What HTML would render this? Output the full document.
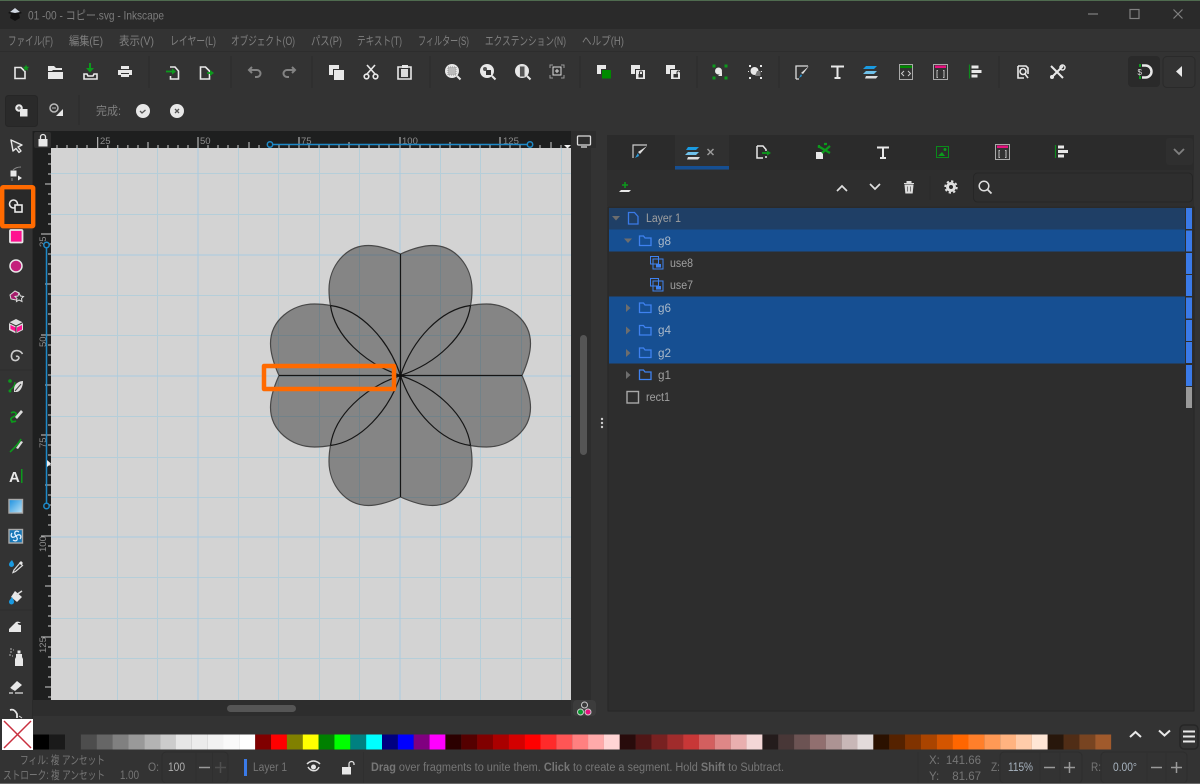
<!DOCTYPE html>
<html><head><meta charset="utf-8"><style>
html,body{margin:0;padding:0;background:#333;width:1200px;height:784px;overflow:hidden}
svg{display:block}
text{font-family:"Liberation Sans","Noto Sans CJK JP",sans-serif}
.m{font-size:12px;fill:#7f7f7f}
.l{font-size:11.5px;fill:#a0a0a0}
.s{font-size:11.5px;fill:#767676}
.r{font-size:9.5px;fill:#8d8d8d}
.w{fill:#e8e8e8}
.o{fill:none;stroke:#e8e8e8;stroke-width:1.6}
.d{fill:none;stroke:#838383;stroke-width:2}
</style></head><body>
<svg width="1200" height="784" viewBox="0 0 1200 784" xmlns="http://www.w3.org/2000/svg">
<rect width="1200" height="784" fill="#333"/>
<!-- title -->
<rect width="1200" height="29" fill="#2a2a2a"/>
<rect width="1200" height="1" fill="#4f6b4f"/>
<rect y="51" width="1200" height="1" fill="#2d2d2d"/>
<path d="M15 8l7 5-3 1 1 4-5 3-5-3 1-4-3-1z" fill="#111"/><path d="M15 8l5 4-5 1-5-1z" fill="#cfd6e0"/>
<text x="28" y="19.500" font-size="12" fill="#7c7c7c" textLength="136" lengthAdjust="spacingAndGlyphs">01 -00 - コピー.svg - Inkscape</text>
<path d="M1088 14h10" stroke="#808080" stroke-width="1.200"/>
<rect x="1130" y="9.500" width="9" height="9" fill="none" stroke="#808080" stroke-width="1.200"/>
<path d="M1173.500 9.500l9 9M1182.500 9.500l-9 9" stroke="#808080" stroke-width="1.200"/>
<!-- menu -->
<text class="m" x="8" y="45" textLength="45" lengthAdjust="spacingAndGlyphs">ファイル(F)</text>
<text class="m" x="69" y="45" textLength="34" lengthAdjust="spacingAndGlyphs">編集(E)</text>
<text class="m" x="119" y="45" textLength="35" lengthAdjust="spacingAndGlyphs">表示(V)</text>
<text class="m" x="170" y="45" textLength="46" lengthAdjust="spacingAndGlyphs">レイヤー(L)</text>
<text class="m" x="231" y="45" textLength="64" lengthAdjust="spacingAndGlyphs">オブジェクト(O)</text>
<text class="m" x="311" y="45" textLength="31" lengthAdjust="spacingAndGlyphs">パス(P)</text>
<text class="m" x="357" y="45" textLength="45" lengthAdjust="spacingAndGlyphs">テキスト(T)</text>
<text class="m" x="418" y="45" textLength="51" lengthAdjust="spacingAndGlyphs">フィルター(S)</text>
<text class="m" x="485" y="45" textLength="81" lengthAdjust="spacingAndGlyphs">エクステンション(N)</text>
<text class="m" x="582" y="45" textLength="42" lengthAdjust="spacingAndGlyphs">ヘルプ(H)</text>
<!-- toolbar seps -->
<path d="M149 56v32M231 56v32M312 56v32M430 56v32M580 56v32M697 56v32M779 56v32M999 56v32M79 95v30" stroke="#2b2b2b"/>
<!-- toolbar icons -->
<path d="M15 67.500h6l4 4v7H15z" class="o"/><path d="M26 64.500l1 2.200 2.300.2-1.800 1.500.6 2.300-2.100-1.200-2 1.200.5-2.300-1.700-1.500 2.300-.2z" fill="#0c9a1c"/>
<path d="M48 66h6l2 2h6v2h-9l-1 1h-4zM48 72h15v7H48z" class="w"/>
<path d="M90 63v7" stroke="#0c9a1c" stroke-width="2"/><path d="M86 68h8l-4 4.500z" fill="#0c9a1c"/><path d="M84 74v5h13v-5h-3l-1 2h-5l-1-2z" class="o"/>
<path d="M121 66h8v3h-8zM118 70h14v5h-3v-2h-8v2h-3zM121 74h8v3h-8z" class="w"/>
<path d="M170 67h5l3.500 4v8h-8v-3" class="o"/><path d="M166 71.500h8" stroke="#0c9a1c" stroke-width="1.800"/><path d="M172 68.500l4 3-4 3z" fill="#0c9a1c"/>
<path d="M200.500 67h5l4 4v8h-9z" class="o"/><path d="M207 73h5" stroke="#0c9a1c" stroke-width="1.800"/><path d="M210 70l4 3-4 3z" fill="#0c9a1c"/>
<path d="M249 70h8a3.500 3.500 0 0 1 0 7h-2M252 67l-3 3 3 3" class="d"/>
<path d="M295 70h-8a3.500 3.500 0 0 0 0 7h2M292 67l3 3-3 3" class="d"/>
<rect x="329" y="65" width="10" height="10" class="w"/><rect x="333" y="69" width="11" height="11" fill="#333"/><rect x="334" y="70" width="10" height="10" class="w"/>
<path d="M367 65l8 9M375 65l-8 9" class="o"/><circle cx="366.500" cy="76.500" r="2.300" class="o"/><circle cx="375.500" cy="76.500" r="2.300" class="o"/>
<path d="M398 67h13v12h-13z" class="o"/><rect x="402" y="65" width="6" height="3" class="w"/><rect x="401" y="69" width="7" height="8" fill="#ddd"/>
<g><circle cx="452" cy="71" r="7" class="w"/><path d="M457 76l3.500 3.500" stroke="#e8e8e8" stroke-width="2"/><rect x="448" y="67" width="8" height="8" fill="#bbb" stroke="#999" stroke-dasharray="1 1"/></g>
<circle cx="487" cy="71" r="7" class="w"/><path d="M492 76l3.500 3.500" stroke="#e8e8e8" stroke-width="2"/><rect x="486" y="70" width="5" height="5" fill="#333"/><circle cx="485" cy="69" r="2" fill="#555"/>
<circle cx="522" cy="71" r="7" class="w"/><path d="M527 76l3.500 3.500" stroke="#e8e8e8" stroke-width="2"/><rect x="519.500" y="66" width="5.500" height="11" fill="#555" stroke="#ddd"/>
<path d="M550 68v-3h3M561 65h3v3M564 75v3h-3M553 78h-3v-3" fill="none" stroke="#999"/><rect x="553" y="67" width="8" height="8" fill="none" stroke="#ddd"/><path d="M555 71h4M557 69v4" stroke="#ddd"/>
<rect x="597" y="65" width="9" height="9" class="w"/><rect x="601" y="69" width="11" height="10" fill="#333"/><rect x="602" y="70" width="9" height="8.500" fill="#008a00"/>
<rect x="631" y="65" width="9" height="9" class="w"/><rect x="635" y="69" width="11" height="11" fill="#333"/><rect x="636" y="70" width="9" height="9" class="w"/><rect x="638.500" y="74" width="4.500" height="3.500" fill="#333"/><path d="M639.500 74v-1.500a1.500 1.500 0 0 1 3 0V74" fill="none" stroke="#333"/>
<rect x="666" y="65" width="9" height="9" class="w"/><rect x="670" y="69" width="11" height="11" fill="#333"/><rect x="671" y="70" width="9" height="9" class="w"/><rect x="673.500" y="74" width="4.500" height="3.500" fill="#333"/><path d="M677 74v-1.500a1.500 1.500 0 0 1 3 0" fill="none" stroke="#333"/>
<path d="M713 65h2v2h-2zM725 65h2v2h-2zM713 77h2v2h-2zM725 77h2v2h-2z" fill="#0c9a1c" stroke="#0c9a1c"/><circle cx="718.500" cy="71" r="3.500" class="w"/><path d="M722 72v4h-4l2-2z" class="w"/>
<path d="M749 65h2v2h-2zM760 65h2v2h-2zM749 77h2v2h-2zM760 77h2v2h-2zM748 71h1v1h-1zM761 71h1v1h-1z" class="w"/><circle cx="754.500" cy="71" r="4" class="w"/><path d="M757 71h3.500v5H755z" fill="#777"/>
<path d="M796 79V66h12M796 79h3" fill="none" stroke="#ddd" stroke-width="1.300"/><path d="M809 66l-6 8-2-1z" fill="#e0e0e0"/><path d="M801 74l-2 4 3-2z" fill="#2a9bdc"/>
<path d="M831 66.500h13M837.500 66.500V78M834.500 78h6" stroke="#e8e8e8" stroke-width="2" fill="none"/>
<path d="M866 66h11l-3 3h-11z" fill="#1a9ae0"/><path d="M866 71h11l-3 3h-11z" fill="#6fc1ea"/><path d="M866 76h12l-2 2.500h-11z" fill="#ddd"/>
<rect x="899.500" y="64.500" width="13" height="15" fill="#333" stroke="#aaa"/><rect x="900" y="65.500" width="12" height="2.500" fill="#008a00"/><path d="M904 71l-2.500 2.500L904 76M908 71l2.500 2.500L908 76" fill="none" stroke="#ccc"/>
<rect x="933.500" y="64.500" width="14" height="15" fill="#333" stroke="#aaa"/><rect x="935" y="65.500" width="11" height="2.500" fill="#e6127f"/><path d="M938 70.500h-1v7h1M943 70.500h1v7h-1" fill="none" stroke="#bbb"/>
<path d="M969.500 64.500v14" stroke="#0c8a1c" stroke-width="1.200"/><rect x="971.500" y="65.500" width="7" height="3" class="w"/><rect x="971.500" y="70" width="10" height="3" class="w"/><rect x="971.500" y="74.500" width="6" height="3" class="w"/>
<path d="M1018 66h8l2 2v6M1018 66v12h6" class="o"/><circle cx="1023" cy="71.500" r="3" class="o"/><path d="M1025 74l3 4" class="o"/>
<path d="M1051 66l12 12M1063 66l-12 12" stroke="#e8e8e8" stroke-width="2"/><circle cx="1062.500" cy="67.500" r="2.500" fill="none" stroke="#e8e8e8" stroke-width="1.500"/><circle cx="1052" cy="77" r="2" class="w"/>
<rect x="1128" y="56" width="32" height="31" rx="4" fill="#2a2a2a"/><rect x="1163" y="56.500" width="32" height="31" rx="4" fill="#333" stroke="#2a2a2a"/>
<path d="M1142 65.500h3.500a6 6 0 0 1 0 12h-3.500" fill="none" stroke="#e8e8e8" stroke-width="2.500"/><path d="M1139 64h2v3h-2zM1139 76h2v3h-2z" fill="#0c9a1c"/><text x="1137.500" y="75" font-size="8" fill="#ddd">$</text>
<path d="M1176 71.500l6-5.500v11z" class="w"/>
<!-- tool controls -->
<rect x="5.500" y="95.500" width="32" height="31" rx="3" fill="#2a2a2a" stroke="#262626"/>
<circle cx="19" cy="108" r="3.800" class="w"/><rect x="20" y="109" width="7.500" height="7.500" class="w"/><path d="M17 108h4M19 106v4" stroke="#333"/>
<circle cx="54" cy="108" r="4" fill="none" stroke="#bbb" stroke-width="1.500"/><path d="M52 108h4" stroke="#bbb"/><path d="M56 116h7v-7z" class="w"/>
<text class="m" x="96" y="115" textLength="25" lengthAdjust="spacingAndGlyphs">完成:</text>
<circle cx="143" cy="111" r="7" class="w"/><path d="M140 111l2 2 3.500-3" fill="none" stroke="#555" stroke-width="1.300"/>
<circle cx="177" cy="111" r="7" class="w"/><path d="M175 109l4 4M179 109l-4 4" stroke="#555" stroke-width="1.300"/>
<!-- ruler/canvas -->
<rect x="33" y="131" width="538" height="585" fill="#1e1f1f"/>
<rect x="34" y="132" width="17" height="16" rx="2" fill="#2f2f2f"/>
<rect x="38.500" y="139" width="9" height="7.500" class="w"/><path d="M40.500 139v-2a2.500 2.500 0 0 1 5 0v2" fill="none" stroke="#e8e8e8" stroke-width="1.300"/>
<rect x="51" y="148" width="520" height="552" fill="#d3d3d3"/>
<g stroke="#b5ced9" stroke-width="1" fill="none">
<path d="M77.500 148v552M117.500 148v552M157.500 148v552M238.500 148v552M278.500 148v552M319.500 148v552M359.500 148v552M440.500 148v552M480.500 148v552M521.500 148v552M561.500 148v552"/>
<path d="M51 173.500h520M51 214.500h520M51 295.500h520M51 335.500h520M51 416.500h520M51 457.500h520M51 497.500h520M51 577.500h520M51 618.500h520M51 658.500h520"/>
</g>
<g stroke="#a9cbe0" stroke-width="1" fill="none"><path d="M198 148v552M400 148v552M51 255h520M51 376h520M51 537h520"/></g>
<!-- ticks -->
<g stroke="#cfcfcf" stroke-width="1" fill="none">
<path d="M57 145v3M67 145v3M77 145v3M87 145v3M97.700 137v11M107.800 145v3M117.800 145v3M127.900 145v3M138 145v3M148 142v6M158 145v3M168 145v3M178 145v3M188 145v3M198 137v11M208 145v3M218 145v3M228 145v3M238 145v3M249 142v6M259 145v3M269 145v3M279 145v3M289 145v3M299 137v11M309 145v3M319 145v3M329 145v3M339 145v3M349 142v6M359 145v3M369 145v3M379 145v3M389 145v3M400 137v11M410 145v3M420 145v3M430 145v3M440 145v3M450 142v6M460 145v3M470 145v3M480 145v3M490 145v3M500 137v11M510 145v3M520 145v3M530 145v3M540 145v3M551 142v6M561 145v3"/>
<path d="M48 154h3M48 164h3M48 174h3M48 194h3M45 184h6M48 204h3M48 214h3M48 224h3M41 234h10M48 244h3M48 254h3M48 264h3M48 274h3M45 284h6M48 294h3M48 304h3M48 314h3M48 324h3M41 335h10M48 345h3M48 355h3M48 365h3M48 375h3M45 385h6M48 395h3M48 405h3M48 415h3M48 425h3M41 435h10M48 445h3M48 455h3M48 465h3M48 475h3M45 485h6M48 495h3M48 505h3M48 515h3M48 525h3M41 536h10M48 546h3M48 556h3M48 566h3M48 576h3M45 586h6M48 596h3M48 606h3M48 616h3M48 626h3M41 637h10M48 647h3M48 657h3M48 667h3M48 677h3M45 687h6M48 697h3"/>
</g>
<text class="r" x="100" y="144">25</text><text class="r" x="200" y="144">50</text><text class="r" x="301" y="144">75</text><text class="r" x="402" y="144">100</text><text class="r" x="503" y="144">125</text>
<text class="r" transform="translate(46,247) rotate(-90)">25</text><text class="r" transform="translate(46,347) rotate(-90)">50</text><text class="r" transform="translate(46,448) rotate(-90)">75</text><text class="r" transform="translate(46,552) rotate(-90)">100</text><text class="r" transform="translate(46,653) rotate(-90)">125</text>
<path d="M270 144.500h260M46.500 245v261" stroke="#1d8ac9" stroke-width="1.500" fill="none"/>
<g fill="#1e1f1f" stroke="#1d8ac9" stroke-width="1.500"><circle cx="270" cy="144.500" r="2.700"/><circle cx="530" cy="144.500" r="2.700"/><circle cx="46.500" cy="245" r="2.700"/><circle cx="46.500" cy="506" r="2.700"/></g>
<path d="M564 145h7l-3.500 3.500z" fill="#eee"/><path d="M47 460l4 3.500-4 3.500z" fill="#eee"/>
<!-- flower -->
<defs>
<path id="hi" d="M70-70C66-40 36-12 0 0"/>
</defs>
<g transform="translate(400.500,375.500)">
<g opacity=".37" fill="#000"><path d="M0-121.500C10-126 21-130 32-130 55-130 71.500-109 71.500-86 71.500-80 71-75 70-70 75-71 80-71.500 86-71.500 109-71.500 130-55 130-32 130-21 126-10 121.500 0 126 10 130 21 130 32 130 55 109 71.500 86 71.500 80 71.500 75 71 70 70 71 75 71.500 80 71.500 86 71.500 109 55 130 32 130 21 130 10 126 0 121.500-10 126-21 130-32 130-55 130-71.500 109-71.500 86-71.500 80-71 75-70 70-75 71-80 71.500-86 71.500-109 71.500-130 55-130 32-130 21-126 10-121.500 0-126-10-130-21-130-32-130-55-109-71.500-86-71.500-80-71.500-75-71-70-70-71-75-71.500-80-71.500-86-71.500-109-55-130-32-130-21-130-10-126 0-121.500Z"/></g>
<g fill="none" stroke="#484848" stroke-width="1.200"><path d="M0-121.500C10-126 21-130 32-130 55-130 71.500-109 71.500-86 71.500-80 71-75 70-70 75-71 80-71.500 86-71.500 109-71.500 130-55 130-32 130-21 126-10 121.500 0 126 10 130 21 130 32 130 55 109 71.500 86 71.500 80 71.500 75 71 70 70 71 75 71.500 80 71.500 86 71.500 109 55 130 32 130 21 130 10 126 0 121.500-10 126-21 130-32 130-55 130-71.500 109-71.500 86-71.500 80-71 75-70 70-75 71-80 71.500-86 71.500-109 71.500-130 55-130 32-130 21-126 10-121.500 0-126-10-130-21-130-32-130-55-109-71.500-86-71.500-80-71.500-75-71-70-70-71-75-71.500-80-71.500-86-71.500-109-55-130-32-130-21-130-10-126 0-121.500Z"/></g>
<g fill="none" stroke="#151515" stroke-width="1.200">
<path d="M0-121.500V121.500M-121.500 0H121.500"/>
<use href="#hi"/><use href="#hi" transform="scale(-1,1)"/><use href="#hi" transform="scale(1,-1)"/><use href="#hi" transform="scale(-1,-1)"/>
<use href="#hi" transform="rotate(90) scale(-1,1)"/><use href="#hi" transform="rotate(90)"/><use href="#hi" transform="rotate(-90)"/><use href="#hi" transform="rotate(-90) scale(-1,1)"/>
</g>
<circle r="1.800" fill="#111"/>
</g>
<rect x="264" y="366" width="130" height="23" fill="none" stroke="#ff6a00" stroke-width="4.500" stroke-linejoin="round"/>
<!-- scrollbars -->
<rect x="33" y="700" width="538" height="16" fill="#2d2d2d"/>
<rect x="227" y="705" width="69" height="7" rx="3.500" fill="#555"/>
<rect x="571" y="148" width="20" height="552" fill="#2d2d2d"/><rect x="571" y="131" width="25" height="17" fill="#2d2d2d"/>
<rect x="580" y="335" width="7" height="120" rx="3.500" fill="#555"/>
<rect x="577.500" y="136" width="13" height="9" rx="1" fill="none" stroke="#ddd" stroke-width="1.300"/><path d="M581 147h6" stroke="#ddd" stroke-width="1.300"/>
<rect x="573" y="700" width="23" height="16" rx="4" fill="#3c3c3c"/>
<circle cx="584.500" cy="705" r="3" fill="none" stroke="#ccc"/><circle cx="580.500" cy="712" r="3" fill="#0a9a30" stroke="#ccc"/><circle cx="588" cy="712" r="3" fill="#e6127f" stroke="#ccc"/>
<circle cx="602" cy="419" r="1.200" fill="#ccc"/><circle cx="602" cy="423" r="1.200" fill="#ccc"/><circle cx="602" cy="427" r="1.200" fill="#ccc"/>
<!-- panel -->
<rect x="607" y="135" width="587" height="35" fill="#2b2b2b"/>
<rect x="607" y="170" width="587" height="36" fill="#2e2e2e"/>
<rect x="675" y="135" width="54" height="35" fill="#303030"/><rect x="675" y="166" width="54" height="3.500" fill="#164f92"/>
<path d="M633 158v-13h14" fill="none" stroke="#ccc" stroke-width="1.200"/><path d="M647 146l-7 8-2-2z" fill="#ddd"/><path d="M638 153l-3 5 4-2z" fill="#2a9bdc"/>
<path d="M688 147h11l-3 3h-10z" fill="#1a9ae0"/><path d="M688 152h11l-3 3h-11z" fill="#6fc1ea"/><path d="M688 157h12l-2 2.500h-11z" fill="#ddd"/>
<path d="M707.500 149l6 6M713.500 149l-6 6" stroke="#999" stroke-width="1.500"/>
<path d="M757 146h6l3 3.500V151M757 146v12h6M766 156v2" fill="none" stroke="#e8e8e8" stroke-width="1.500"/><path d="M762 153h7" stroke="#0c9a1c" stroke-width="1.800"/><path d="M767 150.500l4 2.500-4 2.500z" fill="#0c9a1c"/>
<rect x="816" y="152" width="7" height="7" class="w"/><path d="M818 146l12 7M830 146l-8 7M827 144h-3M819 148v-3" stroke="#0c9a1c" stroke-width="2.200" fill="none"/>
<path d="M877 147.500h12M883 147.500V158M880 158h6" stroke="#e8e8e8" stroke-width="2" fill="none"/>
<rect x="936.500" y="146.500" width="12" height="11" fill="none" stroke="#0a8a1a"/><circle cx="945" cy="149.500" r="1.500" fill="#0c9a1c"/><path d="M938 156l4-4 3 4z" fill="#0c9a1c"/>
<rect x="995.500" y="144.500" width="14" height="15" fill="#333" stroke="#aaa"/><rect x="997" y="145.500" width="11" height="2.500" fill="#e6127f"/><path d="M1000 150.500h-1v7h1M1005 150.500h1v7h-1" fill="none" stroke="#bbb"/>
<path d="M1055.500 145v13" stroke="#0c8a1c" stroke-width="1.200"/><rect x="1058" y="145.500" width="6" height="3" class="w"/><rect x="1058" y="150" width="10" height="3" class="w"/><rect x="1058" y="154.500" width="6" height="3" class="w"/>
<rect x="1166" y="138" width="27" height="27" rx="3" fill="#2f2f2f"/><path d="M1174 149l5 5 5-5" fill="none" stroke="#808080" stroke-width="1.800"/>
<path d="M625 182v6M622 185h6" stroke="#0c9a1c" stroke-width="1.500"/><path d="M621 190h10l-2 2h-10z" class="w"/>
<path d="M837 191l5-5 5 5M870 184l5 5 5-5" fill="none" stroke="#e0e0e0" stroke-width="1.700"/>
<path d="M904 183.500h10M907 183v-1.500h4v1.500M905 185h8l-.8 8h-6.400z" fill="#ddd" stroke="#ddd"/><path d="M907.500 186.500v5M910.500 186.500v5" stroke="#777"/>
<path d="M930 176v24" stroke="#2a2a2a"/>
<circle cx="951" cy="187" r="3.500" fill="none" stroke="#e0e0e0" stroke-width="3"/><circle cx="951" cy="187" r="5.800" fill="none" stroke="#e0e0e0" stroke-width="1.800" stroke-dasharray="2.300 2.240"/>
<rect x="973.500" y="173" width="219" height="29" rx="4" fill="#2e2e2e" stroke="#262626"/>
<circle cx="984" cy="186" r="4.800" fill="none" stroke="#ddd" stroke-width="1.500"/><path d="M987.500 189.500l4 4" stroke="#ddd" stroke-width="1.800"/>
<!-- list -->
<rect x="608" y="207" width="586" height="504" fill="#2d2d2d" stroke="#262626"/>
<rect x="609" y="208" width="576" height="21.500" fill="#1f3f66"/>
<rect x="609" y="229.500" width="576" height="22" fill="#164f92"/>
<rect x="609" y="296.500" width="576" height="67" fill="#164f92"/>
<g fill="#3a7ae8"><rect x="1186" y="208" width="6" height="21"/><rect x="1186" y="230.500" width="6" height="21"/><rect x="1186" y="253" width="6" height="21"/><rect x="1186" y="275" width="6" height="21"/><rect x="1186" y="297.500" width="6" height="21"/><rect x="1186" y="320" width="6" height="21"/><rect x="1186" y="342" width="6" height="21"/><rect x="1186" y="365" width="6" height="21"/></g>
<rect x="1186" y="387" width="6" height="21" fill="#999"/>
<path d="M612 216h8l-4 4.500z M624 238.500h8l-4 4.500z" fill="#6d6d6d"/>
<path d="M626 304v8l4.500-4zM626 326.500v8l4.500-4zM626 349v8l4.500-4zM626 371v8l4.500-4z" fill="#6d6d6d"/>
<path d="M628.500 212.500h6l3.500 4v7.500h-9.500z" fill="none" stroke="#3a7ae8" stroke-width="1.300"/>
<g fill="none" stroke="#3f82f0" stroke-width="1.300"><path d="M639.500 236h4l1.500 2h6v7.500h-11.500z"/><path d="M639.500 303h4l1.500 2h6v7.500h-11.500zM639.500 325.500h4l1.500 2h6v7.500h-11.500zM639.500 348h4l1.500 2h6v7.500h-11.500zM639.500 370h4l1.500 2h6v7.500h-11.500z"/></g>
<g fill="none" stroke="#3f82f0"><path d="M650.500 256.500h8v7.500h-8zM653 259h10v10h-10zM650.500 278.500h8v7.500h-8zM653 281h10v10h-10z"/></g>
<path d="M656 264h5v3.500h-5zM656 286h5v3.500h-5z" fill="#3f82f0"/>
<rect x="627" y="391.500" width="11.500" height="11.500" fill="none" stroke="#a8a8a8" stroke-width="1.400"/>
<text class="l" x="646" y="222" textLength="35" lengthAdjust="spacingAndGlyphs">Layer 1</text>
<text x="658" y="245" font-size="11.500" fill="#a9b8c8" textLength="13" lengthAdjust="spacingAndGlyphs">g8</text>
<text class="l" x="670" y="267" textLength="23" lengthAdjust="spacingAndGlyphs">use8</text>
<text class="l" x="670" y="289" textLength="23" lengthAdjust="spacingAndGlyphs">use7</text>
<text x="658" y="312" font-size="11.500" fill="#a9b8c8" textLength="13" lengthAdjust="spacingAndGlyphs">g6</text>
<text x="658" y="334" font-size="11.500" fill="#a9b8c8" textLength="13" lengthAdjust="spacingAndGlyphs">g4</text>
<text x="658" y="357" font-size="11.500" fill="#a9b8c8" textLength="13" lengthAdjust="spacingAndGlyphs">g2</text>
<text class="l" x="658" y="379" textLength="13" lengthAdjust="spacingAndGlyphs">g1</text>
<text class="l" x="646" y="401" textLength="24" lengthAdjust="spacingAndGlyphs">rect1</text>
<!-- left toolbox -->
<rect x="0" y="131" width="33" height="600" fill="#333"/><path d="M32.500 131v600" stroke="#2a2a2a"/>
<path d="M0 370h32M0 610h32" stroke="#2c2c2c"/>
<path d="M11 140l11 5-4 2 3 4-2 1.500-3-4-3 2.500z" fill="#444" stroke="#e8e8e8" stroke-width="1.400" stroke-linejoin="round"/>
<rect x="10.500" y="170.500" width="6" height="6" class="w"/><path d="M13 170c2-2 5-3 8-3" fill="none" stroke="#888"/><path d="M18 175.500l4 2.500-4 2.500z" class="w"/><path d="M12 178v3" stroke="#888"/>
<rect x="2" y="188" width="31" height="38" fill="#292929"/>
<rect x="2.200" y="187.200" width="31" height="39" rx="1" fill="none" stroke="#ff6a00" stroke-width="4.400"/>
<circle cx="13.500" cy="204" r="4" fill="none" stroke="#e8e8e8" stroke-width="1.600"/><rect x="15" y="205" width="7" height="7" fill="#292929" stroke="#e8e8e8" stroke-width="1.600"/>
<rect x="10" y="230" width="12.500" height="12.500" rx="1" fill="#ff1090" stroke="#e8e8e8" stroke-width="1.800"/>
<circle cx="16" cy="266" r="6" fill="#c4217c" stroke="#e8e8e8" stroke-width="1.500"/>
<path d="M10 295l5-4 4 2 1 5-4 2-5-1z" fill="#a51e6c" stroke="#ddd"/><path d="M19 293l1.500 3 3 .5-2 2 .5 3-3-1.500-2.500 1.500.5-3-2-2 3-.5z" fill="#333" stroke="#ddd"/>
<path d="M16 319l7 3.500v7.500l-7 3.500-7-3.500v-7.500z" fill="#ddd"/><path d="M9 322.500l7 3.500 7-3.500M16 326v7.500" stroke="#333" fill="none"/><path d="M10.500 325l5 2.500v4l-5-2.500zM17 327.500l5-2.500v4.500l-5 2.500z" fill="#ff1090"/>
<path d="M16 355.500a2 2 0 0 1 3 1.500 4 4 0 0 1-6.500 1.500 6 6 0 0 1 1-8 6.500 6.500 0 0 1 9 2.500" fill="none" stroke="#ccc" stroke-width="1.600" transform="translate(0,1)"/>
<path d="M15 382c0 3-2 6-5 8" fill="none" stroke="#0c9a1c" stroke-width="1.300"/><circle cx="10" cy="381" r="1.800" fill="#0c9a1c"/><circle cx="10" cy="391" r="1.500" fill="#0c9a1c"/><path d="M23 381c-4 0-9 3-9 8v3h3c4-1 6-6 6-11z" fill="#ddd"/><path d="M15 391l6-7" stroke="#444"/>
<path d="M11 412c3-2 6 0 5 2s-6 2-5 5 5 1 5 1" fill="none" stroke="#0c9a1c" stroke-width="1.700" transform="translate(0,1)"/><path d="M15 417l6-7 2 2-6 7z" fill="#ddd"/><circle cx="12" cy="422" r="1" fill="#0c9a1c"/>
<path d="M10 452c2-2 8-7 11-13" fill="none" stroke="#0c9a1c" stroke-width="1.600"/><path d="M16 448l5-7 2 1-5 7z" fill="#ddd"/>
<text x="9" y="482" font-size="15" font-weight="bold" fill="#e8e8e8">A</text><rect x="21" y="469" width="1.500" height="14" fill="#0c9a1c"/>
<defs><linearGradient id="gr" x1="0" y1="0" x2="1" y2="1"><stop offset="0" stop-color="#1a90e0"/><stop offset="1" stop-color="#bfe3f5"/></linearGradient></defs>
<rect x="9" y="499.500" width="13.500" height="13.500" fill="url(#gr)" stroke="#aaa" stroke-width="1.400"/>
<rect x="9" y="529.500" width="13.500" height="13.500" fill="#1878b8" stroke="#aaa" stroke-width="1.400"/><path d="M16 536c-3-4 0-6 3-4M16 536c4-3 6 0 4 3M16 536c3 4 0 6-3 4M16 536c-4 3-6 0-4-3" fill="none" stroke="#e0f0ff" stroke-width="1.300"/>
<path d="M14 570l6-7 2.500 2.500-7 6-2.500 1z" fill="#333" stroke="#ddd" stroke-width="1.200"/><path d="M21 561l2 2 -2 2-2-2z" class="w"/><path d="M12 560c-2 2-3 3-3 4.500a2.200 2.200 0 0 0 5 0c0-1.500-1-2.500-2-4.500z" fill="#1a9ae0"/>
<path d="M15 591l7 6-5 5-6-5z" class="w"/><path d="M16 595l6-4" stroke="#ddd" stroke-width="1.600"/><path d="M12 597c-1 2-3 3-3 5a2.300 2.300 0 0 0 5 0c0-2-1-3-2-5z" fill="#1a9ae0"/>
<path d="M9 632v-3c2-2 4-4 7-7 2-1 4 0 5 1h-3c-1 1 1 2 3 2v7z" class="w"/>
<path d="M16 654h6v3l1 2v7h-8v-7l1-2z" class="w"/><rect x="17.500" y="650.500" width="3" height="3" class="w"/><path d="M10 649h2M13 650h1M10 652h2M9 655h2M12 656h1" stroke="#999" stroke-width="1.200"/>
<path d="M10 688l7-7 5 4-7 6z" class="w"/><path d="M10 688l3 3.500" stroke="#444"/><path d="M9 693h4M15 693h8" stroke="#ddd" stroke-width="1.300"/>
<path d="M10 710c3-1 5 0 7 4v4" fill="none" stroke="#e8e8e8" stroke-width="1.800"/><path d="M19 716l3 2" stroke="#ddd"/>
<!-- palette -->
<rect x="33" y="716" width="1167" height="36" fill="#333"/><rect x="0" y="731" width="33" height="21" fill="#333"/>
<rect x="2" y="719" width="31" height="31" fill="#fff"/>
<path d="M4 721l27 27M31 721L4 748" stroke="#c9303f" stroke-width="1.500"/>
<g>
<rect x="33.300" y="734.500" width="15.900" height="15" fill="#000"/><rect x="49.150" y="734.500" width="15.900" height="15" fill="#1a1a1a"/><rect x="65" y="734.500" width="15.900" height="15" fill="#333"/><rect x="80.850" y="734.500" width="15.900" height="15" fill="#4d4d4d"/><rect x="96.700" y="734.500" width="15.900" height="15" fill="#666"/><rect x="112.550" y="734.500" width="15.900" height="15" fill="#808080"/><rect x="128.400" y="734.500" width="15.900" height="15" fill="#999"/><rect x="144.250" y="734.500" width="15.900" height="15" fill="#b3b3b3"/><rect x="160.100" y="734.500" width="15.900" height="15" fill="#ccc"/><rect x="175.950" y="734.500" width="15.900" height="15" fill="#e6e6e6"/><rect x="191.800" y="734.500" width="15.900" height="15" fill="#ececec"/><rect x="207.650" y="734.500" width="15.900" height="15" fill="#f2f2f2"/><rect x="223.500" y="734.500" width="15.900" height="15" fill="#f9f9f9"/><rect x="239.350" y="734.500" width="15.900" height="15" fill="#fff"/>
<rect x="255.200" y="734.500" width="15.900" height="15" fill="#800000"/><rect x="271.050" y="734.500" width="15.900" height="15" fill="#f00"/><rect x="286.900" y="734.500" width="15.900" height="15" fill="#808000"/><rect x="302.750" y="734.500" width="15.900" height="15" fill="#ff0"/><rect x="318.600" y="734.500" width="15.900" height="15" fill="#008000"/><rect x="334.450" y="734.500" width="15.900" height="15" fill="#0f0"/><rect x="350.300" y="734.500" width="15.900" height="15" fill="#008080"/><rect x="366.150" y="734.500" width="15.900" height="15" fill="#0ff"/><rect x="382" y="734.500" width="15.900" height="15" fill="#000080"/><rect x="397.850" y="734.500" width="15.900" height="15" fill="#00f"/><rect x="413.700" y="734.500" width="15.900" height="15" fill="#800080"/><rect x="429.550" y="734.500" width="15.900" height="15" fill="#f0f"/>
<rect x="445.400" y="734.500" width="15.900" height="15" fill="#2b0000"/><rect x="461.250" y="734.500" width="15.900" height="15" fill="#500"/><rect x="477.100" y="734.500" width="15.900" height="15" fill="#800000"/><rect x="492.950" y="734.500" width="15.900" height="15" fill="#a00"/><rect x="508.800" y="734.500" width="15.900" height="15" fill="#d40000"/><rect x="524.650" y="734.500" width="15.900" height="15" fill="#f00"/><rect x="540.500" y="734.500" width="15.900" height="15" fill="#ff2a2a"/><rect x="556.350" y="734.500" width="15.900" height="15" fill="#f55"/><rect x="572.200" y="734.500" width="15.900" height="15" fill="#ff8080"/><rect x="588.050" y="734.500" width="15.900" height="15" fill="#faa"/><rect x="603.900" y="734.500" width="15.900" height="15" fill="#ffd5d5"/>
<rect x="619.750" y="734.500" width="15.900" height="15" fill="#280b0b"/><rect x="635.600" y="734.500" width="15.900" height="15" fill="#501616"/><rect x="651.450" y="734.500" width="15.900" height="15" fill="#782121"/><rect x="667.300" y="734.500" width="15.900" height="15" fill="#a02c2c"/><rect x="683.150" y="734.500" width="15.900" height="15" fill="#c83737"/><rect x="699" y="734.500" width="15.900" height="15" fill="#d35f5f"/><rect x="714.850" y="734.500" width="15.900" height="15" fill="#de8787"/><rect x="730.700" y="734.500" width="15.900" height="15" fill="#e9afaf"/><rect x="746.550" y="734.500" width="15.900" height="15" fill="#f4d7d7"/>
<rect x="762.400" y="734.500" width="15.900" height="15" fill="#241c1c"/><rect x="778.250" y="734.500" width="15.900" height="15" fill="#483737"/><rect x="794.100" y="734.500" width="15.900" height="15" fill="#6c5353"/><rect x="809.950" y="734.500" width="15.900" height="15" fill="#916f6f"/><rect x="825.800" y="734.500" width="15.900" height="15" fill="#ac9393"/><rect x="841.650" y="734.500" width="15.900" height="15" fill="#c8b7b7"/><rect x="857.500" y="734.500" width="15.900" height="15" fill="#e3dbdb"/>
<rect x="873.350" y="734.500" width="15.900" height="15" fill="#2b1100"/><rect x="889.200" y="734.500" width="15.900" height="15" fill="#520"/><rect x="905.050" y="734.500" width="15.900" height="15" fill="#803300"/><rect x="920.900" y="734.500" width="15.900" height="15" fill="#a40"/><rect x="936.750" y="734.500" width="15.900" height="15" fill="#d45500"/><rect x="952.600" y="734.500" width="15.900" height="15" fill="#f60"/><rect x="968.450" y="734.500" width="15.900" height="15" fill="#ff7f2a"/><rect x="984.300" y="734.500" width="15.900" height="15" fill="#f95"/><rect x="1000.150" y="734.500" width="15.900" height="15" fill="#ffb380"/><rect x="1016" y="734.500" width="15.900" height="15" fill="#fca"/><rect x="1031.850" y="734.500" width="15.900" height="15" fill="#ffe6d5"/>
<rect x="1047.700" y="734.500" width="15.900" height="15" fill="#28170b"/><rect x="1063.550" y="734.500" width="15.900" height="15" fill="#502d16"/><rect x="1079.400" y="734.500" width="15.900" height="15" fill="#784421"/><rect x="1095.250" y="734.500" width="15.900" height="15" fill="#a05a2c"/>
</g>
<path d="M1130 737l5.500-5 5.500 5M1159 730.500l5.500 5 5.500-5" fill="none" stroke="#e8e8e8" stroke-width="2"/>
<rect x="1180" y="725" width="18" height="24" rx="4" fill="#333" stroke="#262626" stroke-width="1.500"/><path d="M1183 731.500h12M1183 736.500h12M1183 741.500h12" stroke="#e8e8e8" stroke-width="2"/>
<!-- status -->
<text class="s" x="20" y="764" textLength="85" lengthAdjust="spacingAndGlyphs">フィル: 複 アンセット</text>
<text class="s" x="3" y="779" textLength="102" lengthAdjust="spacingAndGlyphs">ストローク: 複 アンセット</text>
<text class="s" x="120" y="779" textLength="19" lengthAdjust="spacingAndGlyphs">1.00</text>
<text class="s" x="148" y="771" textLength="11" lengthAdjust="spacingAndGlyphs">O:</text>
<rect x="162" y="752" width="66" height="31" rx="4" fill="#333" stroke="#2d2d2d"/><path d="M196 752v31M212.500 752v31" stroke="#2f2f2f"/>
<text x="168" y="771" font-size="11.500" fill="#b0b0b0" textLength="17" lengthAdjust="spacingAndGlyphs">100</text>
<path d="M199 767.500h11" stroke="#9a9a9a" stroke-width="1.500"/><path d="M215 767.500h11M220.500 762v11" stroke="#4f4f4f" stroke-width="1.500"/>
<rect x="244" y="759" width="3" height="17" fill="#3a7ae8"/>
<text class="s" x="253" y="771" textLength="34" lengthAdjust="spacingAndGlyphs">Layer 1</text>
<path d="M307 764c4-4 9-4 13 0M308 767c3 5 9 5 11 0" fill="none" stroke="#e0e0e0" stroke-width="1.500"/><circle cx="313.500" cy="767" r="2.500" class="w"/>
<rect x="342" y="767" width="9" height="7.500" class="w"/><path d="M349 767v-3a2.500 2.500 0 0 1 5 0v1" fill="none" stroke="#e0e0e0" stroke-width="1.300"/>
<path d="M363.500 752v32M918 752v32" stroke="#2f2f2f"/>
<text class="s" x="371" y="771" textLength="413" lengthAdjust="spacingAndGlyphs"><tspan font-weight="bold">Drag</tspan> over fragments to unite them. <tspan font-weight="bold">Click</tspan> to create a segment. Hold <tspan font-weight="bold">Shift</tspan> to Subtract.</text>
<text class="s" x="929" y="764">X:</text><text class="s" x="929" y="780">Y:</text>
<text class="s" x="981" y="764" text-anchor="end">141.66</text><text class="s" x="981" y="780" text-anchor="end">81.67</text>
<rect x="1000" y="752" width="82" height="31" rx="4" fill="#333" stroke="#2d2d2d"/><path d="M1040 752v31M1060 752v31" stroke="#2f2f2f"/>
<text class="s" x="991" y="771" textLength="9" lengthAdjust="spacingAndGlyphs">Z:</text>
<text x="1008" y="771" font-size="11.500" fill="#a8b4c0" textLength="25" lengthAdjust="spacingAndGlyphs">115%</text>
<path d="M1044 767.500h11M1064 767.500h11M1069.500 762v11" stroke="#9a9a9a" stroke-width="1.500"/>
<rect x="1101" y="752" width="86" height="31" rx="4" fill="#333" stroke="#2d2d2d"/><path d="M1147 752v31M1166 752v31" stroke="#2f2f2f"/>
<text class="s" x="1091" y="771" textLength="10" lengthAdjust="spacingAndGlyphs">R:</text>
<text x="1113" y="771" font-size="11.500" fill="#a8b4c0" textLength="24" lengthAdjust="spacingAndGlyphs">0.00°</text>
<path d="M1151 767.500h11M1171 767.500h11M1176.500 762v11" stroke="#9a9a9a" stroke-width="1.500"/>
<rect y="783" width="1200" height="1" fill="#6a6a6a"/>
</svg>
</body></html>
